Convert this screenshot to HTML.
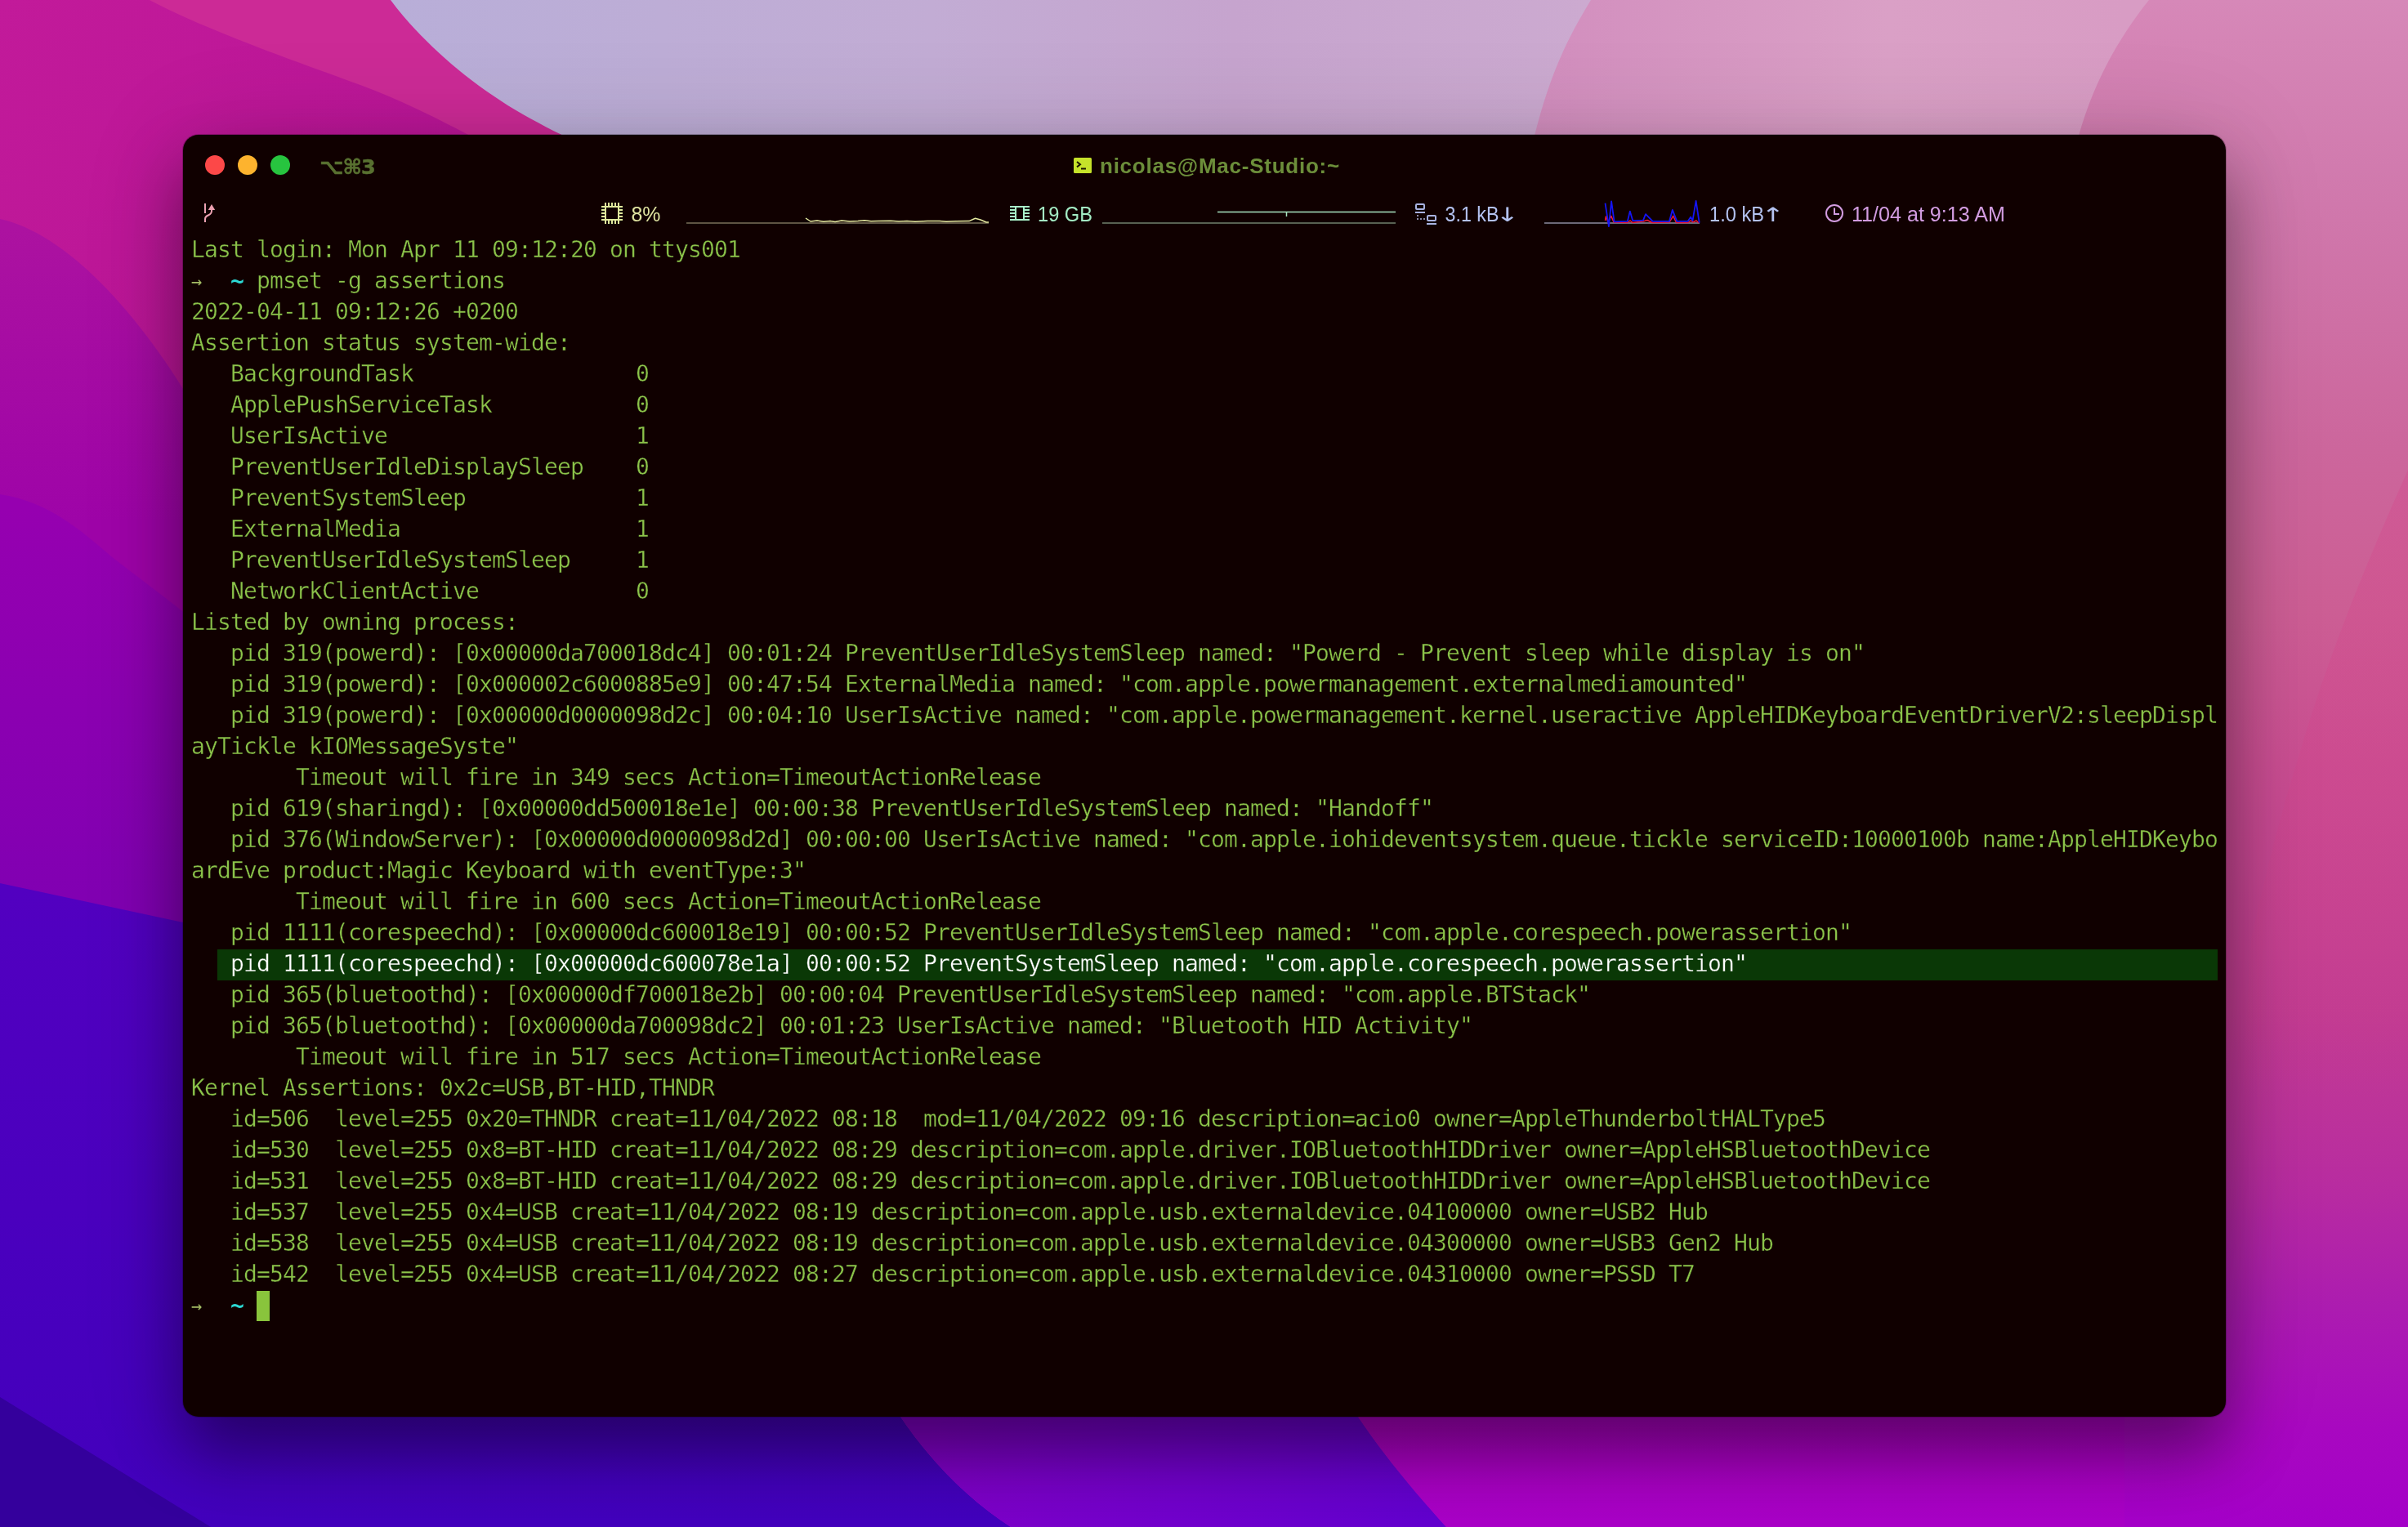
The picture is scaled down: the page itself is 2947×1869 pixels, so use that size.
<!DOCTYPE html>
<html lang="en">
<head>
<meta charset="utf-8">
<title>nicolas@Mac-Studio:~</title>
<style>
html,body{margin:0;padding:0;}
body{width:2947px;height:1869px;overflow:hidden;position:relative;background:#8a10a8;font-family:"Liberation Sans","DejaVu Sans",sans-serif;}
#bg{position:absolute;left:0;top:0;width:2947px;height:1869px;display:block;}
#win{position:absolute;left:224px;top:165px;width:2500px;height:1569px;background:#100000;border-radius:19px;
 box-shadow:0 0 0 1px rgba(0,0,0,.22), 0 45px 80px 0 rgba(0,0,0,.40), 0 6px 130px 0 rgba(0,0,0,.14);}
.tl{position:absolute;top:25px;width:24px;height:24px;border-radius:50%;}
#t1{left:27px;background:#fc4848;}
#t2{left:67px;background:#fdb32e;}
#t3{left:107px;background:#27c43f;}
#kbd{will-change:transform;position:absolute;left:167px;top:23px;font:bold 25.5px/32px "DejaVu Sans","Liberation Sans",sans-serif;color:#587030;-webkit-text-stroke:.5px #587030;letter-spacing:-1px;white-space:pre;}
#title{will-change:transform;position:absolute;left:1122px;top:21.7px;font:bold 26px/32px "Liberation Sans",sans-serif;color:#6c8e3a;letter-spacing:.75px;white-space:pre;}
#ticon{position:absolute;left:1090px;top:28px;width:22px;height:19px;}
#term{will-change:transform;position:absolute;left:10px;top:122.5px;width:2480px;font-family:"DejaVu Sans Mono","Liberation Mono",monospace;font-size:28px;letter-spacing:-.8574px;color:#8bc34a;-webkit-text-stroke:.35px #100000;}
.ln{height:38px;line-height:35.8px;white-space:pre;overflow:hidden;}
.hl{background:#0a3806;color:#fff;-webkit-text-stroke:.35px #0a3806;display:inline-block;height:38px;vertical-align:top;}
.cur{background:#89c43c;display:inline-block;height:38px;margin-top:-1px;vertical-align:top;}
.ti{color:#2cd8d4;font-weight:bold;-webkit-text-stroke:0;}
.ar{color:#a4bc64;-webkit-text-stroke:0;display:inline-block;width:16px;font-size:22px;letter-spacing:0;vertical-align:top;text-indent:0;position:relative;top:1px;left:-.3px;}
</style>
</head>
<body>
<svg id="bg" viewBox="0 0 2947 1869" preserveAspectRatio="none">
<defs>
<linearGradient id="gTop" gradientUnits="userSpaceOnUse" x1="480" y1="0" x2="1950" y2="0">
<stop offset="0" stop-color="#b8aed8"/><stop offset=".45" stop-color="#c2acd4"/><stop offset=".7" stop-color="#c6a4ce"/><stop offset="1" stop-color="#ccaad0"/>
</linearGradient>
<linearGradient id="gPink1" gradientUnits="userSpaceOnUse" x1="1880" y1="0" x2="2600" y2="0">
<stop offset="0" stop-color="#d28ebe"/><stop offset=".6" stop-color="#daa0c6"/><stop offset="1" stop-color="#d89cc4"/>
</linearGradient>
<linearGradient id="gRight" gradientUnits="userSpaceOnUse" x1="0" y1="0" x2="0" y2="1869">
<stop offset="0" stop-color="#d688b8"/><stop offset=".134" stop-color="#d078ac"/><stop offset=".294" stop-color="#cc669c"/><stop offset=".40" stop-color="#cc5e94"/><stop offset=".50" stop-color="#ca4e92"/><stop offset=".663" stop-color="#c23c92"/><stop offset=".776" stop-color="#b82ca0"/><stop offset=".856" stop-color="#ac1cb0"/><stop offset=".936" stop-color="#a808c0"/><stop offset="1" stop-color="#a400c8"/>
</linearGradient>
<linearGradient id="gW0" gradientUnits="userSpaceOnUse" x1="0" y1="0" x2="400" y2="500">
<stop offset="0" stop-color="#c21a9a"/><stop offset="1" stop-color="#b81496"/>
</linearGradient>
<linearGradient id="gW1" gradientUnits="userSpaceOnUse" x1="0" y1="280" x2="0" y2="640">
<stop offset="0" stop-color="#ac12a0"/><stop offset="1" stop-color="#9e04a8"/>
</linearGradient>
<linearGradient id="gW2" gradientUnits="userSpaceOnUse" x1="0" y1="620" x2="0" y2="1120">
<stop offset="0" stop-color="#9600b0"/><stop offset="1" stop-color="#8000b2"/>
</linearGradient>
<linearGradient id="gW3" gradientUnits="userSpaceOnUse" x1="0" y1="1090" x2="0" y2="1869">
<stop offset="0" stop-color="#5200c0"/><stop offset="1" stop-color="#4200bc"/>
</linearGradient>
<linearGradient id="gVio" gradientUnits="userSpaceOnUse" x1="1150" y1="1700" x2="1750" y2="1869">
<stop offset="0" stop-color="#8002c6"/><stop offset=".5" stop-color="#7200cc"/><stop offset="1" stop-color="#6200ce"/>
</linearGradient>
<linearGradient id="gMag" gradientUnits="userSpaceOnUse" x1="0" y1="1700" x2="0" y2="1869">
<stop offset="0" stop-color="#ac04c0"/><stop offset="1" stop-color="#a800c6"/>
</linearGradient>
<linearGradient id="gSat" gradientUnits="userSpaceOnUse" x1="0" y1="575" x2="0" y2="1350">
<stop offset="0" stop-color="#d64088" stop-opacity=".28"/><stop offset=".5" stop-color="#d64088" stop-opacity=".2"/><stop offset="1" stop-color="#d64088" stop-opacity="0"/>
</linearGradient>
</defs>
<rect width="2947" height="1869" fill="url(#gRight)"/>
<path d="M2947 575C2900 680 2850 800 2815 920C2790 1000 2775 1060 2755 1150L2740 1400H2947Z" fill="url(#gSat)"/>
<!-- top lavender -->
<path d="M430 0H1960L1870 200H430Z" fill="url(#gTop)"/>
<!-- top pink 1 -->
<path d="M1947 0C1910 60 1890 110 1870 200H2536C2553 115 2590 50 2630 0Z" fill="url(#gPink1)"/>
<!-- top-left magenta base -->
<path d="M0 0H478C515 50 575 103 640 140C665 154 690 167 720 180V560H0Z" fill="#cc2a96"/>
<path d="M0 0H183C255 38 370 78 441 104C500 126 545 150 640 200V560H0Z" fill="url(#gW0)"/>
<!-- wave 1 -->
<path d="M0 268C80 285 175 385 250 520V800H0Z" fill="url(#gW1)"/>
<!-- wave 2 -->
<path d="M0 605C60 614 100 650 135 680C170 708 205 732 260 778V1200H0Z" fill="url(#gW2)"/>
<!-- wave 3 blue -->
<path d="M0 1081L224 1129L420 1170V1690H1060C1090 1720 1095 1725 1102 1734C1140 1790 1185 1835 1237 1869H0Z" fill="url(#gW3)"/>
<path d="M0 1710L258 1869H0Z" fill="#34009c"/>
<!-- bottom violet -->
<path d="M1040 1690H1640L1662 1734C1700 1790 1735 1830 1770 1869H1237C1185 1835 1140 1790 1102 1734Z" fill="url(#gVio)"/>
<!-- bottom magenta -->
<path d="M1630 1690H2600V1869H1770C1735 1830 1700 1790 1662 1734Z" fill="url(#gMag)"/>
</svg>

<div id="win">
<div class="tl" id="t1"></div><div class="tl" id="t2"></div><div class="tl" id="t3"></div>
<div id="kbd">⌥⌘3</div>
<svg id="ticon" viewBox="0 0 22 19"><rect width="22" height="19" rx="1.5" fill="#c6e22a"/><path d="M4 5l4 3.2L4 11.4" fill="none" stroke="#1a1400" stroke-width="2"/><path d="M9 13.5h6" stroke="#1a1400" stroke-width="2"/></svg>
<div id="title">nicolas@Mac-Studio:~</div>
<svg id="status" viewBox="224 230 2500 60" width="2500" height="60" style="will-change:transform;position:absolute;left:0;top:65px;font-family:'Liberation Sans',sans-serif;font-size:25.5px;">
<!-- git branch -->
<g fill="none" stroke="#eca0b0" stroke-width="2">
<path d="M251 249V261"/>
<path d="M251 272V268C251 262 259 265 259 258V255"/>
</g>
<path d="M259 250L263.2 257H254.8Z" fill="#eca0b0"/>
<!-- cpu -->
<g stroke="#dfe89c" stroke-width="2" fill="none">
<path d="M741 248V274M757 248V274M736 253H762M736 269H762"/>
<path d="M745 248V253M749 248V253M753 248V253M745 269V274M749 269V274M753 269V274M736 257H741M736 261H741M736 265H741M757 257H762M757 261H762M757 265H762"/>
</g>
<text x="772.5" y="270.5" fill="#dfe3a0" textLength="36" lengthAdjust="spacingAndGlyphs">8%</text>
<path d="M840 273H1210" stroke="#78705a" stroke-width="1.6"/>
<path d="M986 267L992 271L1000 270L1008 271.3L1016 270.4L1022 271.4L1030 270L1040 271L1050 270.6L1058 269.8L1066 270.8L1075 270.4L1090 270.2L1100 271L1110 270.6L1120 271.2L1135 270.6L1150 270.4L1158 271.3L1170 270.8L1186 270.6L1193.5 267.2L1200 269L1207 272H1210" fill="none" stroke="#e4eaa0" stroke-width="1.5" stroke-linejoin="round"/>
<!-- memory -->
<g stroke="#a8f0c8" stroke-width="2" fill="none">
<path d="M1236 253H1260M1236 269H1260M1243 253V269M1253 253V269"/>
<path d="M1236 257H1243M1236 261H1243M1236 265H1243M1253 257H1260M1253 261H1260M1253 265H1260"/>
</g>
<text x="1270" y="270.5" fill="#a4ecc4" textLength="67" lengthAdjust="spacingAndGlyphs">19 GB</text>
<path d="M1349 273H1708" stroke="#70826e" stroke-width="1.6"/>
<path d="M1490 259.5H1574.5V265V259.5H1708" fill="none" stroke="#a8e4c0" stroke-width="1.5"/>
<!-- network -->
<g stroke="#a8b2e0" stroke-width="2" fill="none">
<rect x="1733" y="250" width="10" height="6" rx="1"/><path d="M1732 260H1744"/>
<rect x="1747" y="264" width="10" height="6" rx="1"/><path d="M1746 274H1758"/>
</g>
<g fill="#8c88a8"><rect x="1734" y="263" width="2" height="2"/><rect x="1734" y="267" width="2" height="2"/><rect x="1738" y="267" width="2" height="2"/><rect x="1742" y="267" width="2" height="2"/></g>
<text x="1768.5" y="270.5" fill="#b4c2f0" textLength="66" lengthAdjust="spacingAndGlyphs">3.1 kB</text><text transform="translate(1830.4 270.8) scale(1.42 1)" font-family="DejaVu Sans" font-size="24" fill="#b4c2f0">↓</text>
<path d="M1890 273H2080" stroke="#8c8ca0" stroke-width="1.6"/>
<path d="M1964.5 270L1965.4 265L1968 272L1971.8 264.4L1975 272L1992 272.4L1995 270L1998 272.5L2011 271L2016 269.5L2022 272.5L2043 272L2047.7 264.4L2051.5 272.5L2066 272.5L2069 270L2072 272L2076 270L2079 273" fill="none" stroke="#f01838" stroke-width="1.5" stroke-linejoin="round"/>
<path d="M1964.5 248.7L1968.9 277.2L1972.1 246.4L1975.6 271.4L1991.9 270.8L1994.8 258.6L1998.3 270.2L2011 269.7L2014 262.1L2022.7 270.8L2043 270.8L2046.8 256.9L2052.3 270.8L2065.7 270.8L2069.2 265.6L2071.5 270.2L2075.6 245.8L2079.7 272.6" fill="none" stroke="#1414f4" stroke-width="1.8" stroke-linejoin="round"/>
<text x="2092" y="270.5" fill="#b4c2f0" textLength="67" lengthAdjust="spacingAndGlyphs">1.0 kB</text><text transform="translate(2155.6 270.8) scale(1.42 1)" font-family="DejaVu Sans" font-size="24" fill="#b4c2f0">↑</text>
<!-- clock -->
<circle cx="2245" cy="261" r="10" fill="none" stroke="#d29ce0" stroke-width="2"/>
<path d="M2245 254.5V262H2251" fill="none" stroke="#d29ce0" stroke-width="2"/>
<text x="2266" y="270.5" fill="#d29ce0" textLength="188" lengthAdjust="spacingAndGlyphs">11/04 at 9:13 AM</text>
</svg>

<div id="term">
<div class="ln">Last login: Mon Apr 11 09:12:20 on ttys001</div>
<div class="ln"><span class="ar">→</span>  <span class="ti">~</span> pmset -g assertions</div>
<div class="ln">2022-04-11 09:12:26 +0200</div>
<div class="ln">Assertion status system-wide:</div>
<div class="ln">   BackgroundTask                 0</div>
<div class="ln">   ApplePushServiceTask           0</div>
<div class="ln">   UserIsActive                   1</div>
<div class="ln">   PreventUserIdleDisplaySleep    0</div>
<div class="ln">   PreventSystemSleep             1</div>
<div class="ln">   ExternalMedia                  1</div>
<div class="ln">   PreventUserIdleSystemSleep     1</div>
<div class="ln">   NetworkClientActive            0</div>
<div class="ln">Listed by owning process:</div>
<div class="ln">   pid 319(powerd): [0x00000da700018dc4] 00:01:24 PreventUserIdleSystemSleep named: "Powerd - Prevent sleep while display is on"</div>
<div class="ln">   pid 319(powerd): [0x000002c6000885e9] 00:47:54 ExternalMedia named: "com.apple.powermanagement.externalmediamounted"</div>
<div class="ln">   pid 319(powerd): [0x00000d0000098d2c] 00:04:10 UserIsActive named: "com.apple.powermanagement.kernel.useractive AppleHIDKeyboardEventDriverV2:sleepDispl</div>
<div class="ln">ayTickle kIOMessageSyste"</div>
<div class="ln">        Timeout will fire in 349 secs Action=TimeoutActionRelease</div>
<div class="ln">   pid 619(sharingd): [0x00000dd500018e1e] 00:00:38 PreventUserIdleSystemSleep named: "Handoff"</div>
<div class="ln">   pid 376(WindowServer): [0x00000d0000098d2d] 00:00:00 UserIsActive named: "com.apple.iohideventsystem.queue.tickle serviceID:10000100b name:AppleHIDKeybo</div>
<div class="ln">ardEve product:Magic Keyboard with eventType:3"</div>
<div class="ln">        Timeout will fire in 600 secs Action=TimeoutActionRelease</div>
<div class="ln">   pid 1111(corespeechd): [0x00000dc600018e19] 00:00:52 PreventUserIdleSystemSleep named: "com.apple.corespeech.powerassertion"</div>
<div class="ln">  <span class="hl"> pid 1111(corespeechd): [0x00000dc600078e1a] 00:00:52 PreventSystemSleep named: "com.apple.corespeech.powerassertion"                                    </span></div>
<div class="ln">   pid 365(bluetoothd): [0x00000df700018e2b] 00:00:04 PreventUserIdleSystemSleep named: "com.apple.BTStack"</div>
<div class="ln">   pid 365(bluetoothd): [0x00000da700098dc2] 00:01:23 UserIsActive named: "Bluetooth HID Activity"</div>
<div class="ln">        Timeout will fire in 517 secs Action=TimeoutActionRelease</div>
<div class="ln">Kernel Assertions: 0x2c=USB,BT-HID,THNDR</div>
<div class="ln">   id=506  level=255 0x20=THNDR creat=11/04/2022 08:18  mod=11/04/2022 09:16 description=acio0 owner=AppleThunderboltHALType5</div>
<div class="ln">   id=530  level=255 0x8=BT-HID creat=11/04/2022 08:29 description=com.apple.driver.IOBluetoothHIDDriver owner=AppleHSBluetoothDevice</div>
<div class="ln">   id=531  level=255 0x8=BT-HID creat=11/04/2022 08:29 description=com.apple.driver.IOBluetoothHIDDriver owner=AppleHSBluetoothDevice</div>
<div class="ln">   id=537  level=255 0x4=USB creat=11/04/2022 08:19 description=com.apple.usb.externaldevice.04100000 owner=USB2 Hub</div>
<div class="ln">   id=538  level=255 0x4=USB creat=11/04/2022 08:19 description=com.apple.usb.externaldevice.04300000 owner=USB3 Gen2 Hub</div>
<div class="ln">   id=542  level=255 0x4=USB creat=11/04/2022 08:27 description=com.apple.usb.externaldevice.04310000 owner=PSSD T7</div>
<div class="ln"><span class="ar">→</span>  <span class="ti">~</span> <span class="cur"> </span></div>
</div>
</div>
</body>
</html>
